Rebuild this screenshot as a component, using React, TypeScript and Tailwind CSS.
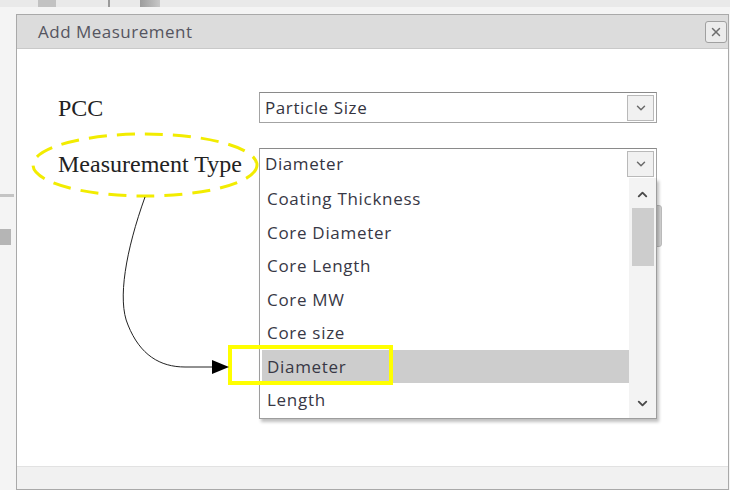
import { ChevronDown, ChevronUp, X } from "lucide-react";

const options = [
  "Coating Thickness",
  "Core Diameter",
  "Core Length",
  "Core MW",
  "Core size",
  "Diameter",
  "Length",
];

const ui = { fontFamily: '"Open Sans", "DejaVu Sans", sans-serif' };
const serif = { fontFamily: '"Liberation Serif", "Times New Roman", serif' };

function SelectBox({ value }: { value: string }) {
  return (
    <div className="flex h-[31px] w-[398px] items-center border border-[#a3a3a3] border-t-[#8a8a8a] bg-white pl-[5px] pr-[2px]">
      <span className="flex-1 text-[17px] tracking-[0.6px] text-[#34343f]" style={ui}>
        {value}
      </span>
      <div className="flex h-[26px] w-[27px] items-center justify-center border border-[#b9b9b9] bg-[#f1f1f1]">
        <ChevronDown size={14} strokeWidth={2.5} className="text-[#6a6a6a]" />
      </div>
    </div>
  );
}

export default function App() {
  return (
    <div className="relative h-[490px] w-[730px] overflow-hidden bg-[#f4f4f4] pl-[16px] pt-[14px]">
      {/* page behind the dialog */}
      <div className="absolute left-0 top-0 flex h-[7px] w-full bg-[#e9e9e9]">
        <div className="ml-[38px] h-full w-[18px] bg-[#c2c2c2]" />
        <div className="ml-[52px] h-full w-[2px] bg-[#9a9a9a]" />
        <div className="ml-[30px] h-full w-[20px] bg-gradient-to-r from-[#9c9c9c] to-[#c8c8c8]" />
      </div>
      <div className="absolute left-0 top-[194px] h-[3px] w-[14px] bg-[#c4c4c4]" />
      <div className="absolute left-0 top-[229px] h-[16px] w-[11px] bg-[#b5b5b5]" />

      <div className="relative flex h-[476px] w-[713px] flex-col border border-[#a9a9a9] bg-white">
        <div className="flex h-[34px] items-center justify-between border-b border-[#c9c9c9] bg-[#dcdcdc] pl-[21px] pr-[1px]">
          <span className="text-[17px] tracking-[0.5px] text-[#555560]" style={ui}>
            Add Measurement
          </span>
          <div className="flex h-[22px] w-[22px] items-center justify-center rounded-[3px] border border-[#a0a0a0] bg-[#ececec]">
            <X size={14} strokeWidth={2.5} className="text-[#6e6e6e]" />
          </div>
        </div>

        <div className="relative flex flex-1 flex-col gap-[25px] pl-[41px] pt-[43px]">
          <div className="flex items-center">
            <span className="w-[201px] text-[24px] leading-none text-[#222]" style={serif}>
              PCC
            </span>
            <SelectBox value="Particle Size" />
          </div>
          <div className="relative flex items-center">
            <span className="w-[201px] text-[24px] leading-none text-[#222]" style={serif}>
              Measurement Type
            </span>
            <SelectBox value="Diameter" />

            {/* edge of a field hidden by the open list */}
            <div className="absolute left-[596px] top-[57px] h-[42px] w-[8px] rounded-r-[3px] border border-[#bdbdbd] bg-[#d4d4d4]" />

            {/* open option list */}
            <div className="absolute left-[201px] top-[30px] flex h-[241px] w-[398px] border border-t-0 border-[#9d9d9d] bg-white shadow-[2px_3px_3px_rgba(0,0,0,0.25)]">
              <div className="flex flex-1 flex-col pl-[2px] pt-[4px]">
                {options.map((o) => (
                  <div
                    key={o}
                    className={
                      "flex h-[33.5px] items-center pl-[5px] text-[17px] tracking-[0.7px] text-[#383845] " +
                      (o === "Diameter" ? "bg-[#cdcdcd]" : "")
                    }
                    style={ui}
                  >
                    {o}
                  </div>
                ))}
              </div>
              <div className="flex w-[27px] flex-col items-center bg-[#f3f3f3] pt-[9px]">
                <ChevronUp size={15} strokeWidth={3} className="text-[#4a4a4a]" />
                <div className="mt-[6px] h-[58px] w-[22px] bg-[#cdcdcd]" />
                <div className="flex-1" />
                <ChevronDown size={15} strokeWidth={3} className="mb-[7px] text-[#4a4a4a]" />
              </div>
            </div>
          </div>
        </div>

        <div className="h-[23px] border-t border-[#e2e2e2] bg-[#f1f1f1]" />
      </div>

      {/* callout drawn over the form */}
      <svg
        className="pointer-events-none absolute left-0 top-0"
        width="730"
        height="490"
        viewBox="0 0 730 490"
      >
        <ellipse
          cx="145"
          cy="165"
          rx="112"
          ry="31"
          fill="none"
          stroke="#f2ec00"
          strokeWidth="3"
          strokeDasharray="18 10"
        />
        <rect x="230" y="347" width="161" height="36" fill="none" stroke="#ffff00" strokeWidth="4" />
        <path
          d="M145 197 C 126 250, 117 300, 128 325 C 140 355, 160 367, 185 367 L 214 367"
          fill="none"
          stroke="#222"
          strokeWidth="1"
        />
        <polygon points="212,360 229,367 212,374" fill="#000" />
      </svg>
    </div>
  );
}
